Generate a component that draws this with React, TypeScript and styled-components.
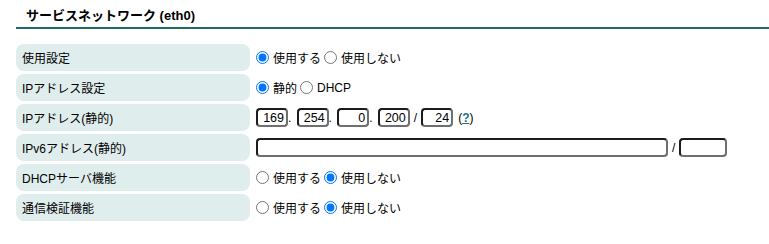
import React from 'react';
import styled, { createGlobalStyle } from 'styled-components';

const GlobalStyle = createGlobalStyle`
    html, body {
        margin: 0;
        padding: 0;
        background: #ffffff;
    }
    body {
        font-family: "Liberation Sans", "Noto Sans CJK JP", sans-serif;
        font-size: 12px;
        color: #000000;
    }
`;

const Page = styled.div`
    padding: 0 0 0 16px;
`;

const Title = styled.h2`
    margin: 0;
    height: 29px;
    box-sizing: border-box;
    padding: 7px 0 0 10px;
    font-size: 13px;
    line-height: 18px;
    font-weight: bold;
    border-bottom: 2px solid #1f6b66;
`;

const Table = styled.div`
    display: grid;
    grid-template-columns: 234px 1fr;
    row-gap: 3px;
    margin-top: 15px;
`;

const Label = styled.div`
    height: 27px;
    display: flex;
    align-items: center;
    padding-left: 6px;
    background: #e0eded;
    border-radius: 8px;
    white-space: nowrap;
`;

const Value = styled.div`
    display: flex;
    align-items: center;
    padding-left: 6px;
    white-space: nowrap;
`;

const Choice = styled.label`
    display: inline-flex;
    align-items: center;
    margin-right: 3px;
    cursor: pointer;
`;

const Radio = styled.input.attrs({ type: 'radio' })`
    width: 13px;
    height: 13px;
    margin: 0 4px 0 0;
`;

const Field = styled.input.attrs({ type: 'text' })<{ $w: number }>`
    width: ${props => `${props.$w}px`};
    height: 19px;
    box-sizing: border-box;
    margin: 0;
    padding: 0 2px;
    font-family: "Liberation Sans", sans-serif;
    font-size: 12.5px;
    text-align: right;
    border: 2px solid;
    border-color: #1c1c1c #6f6f6f #6f6f6f #1c1c1c;
    border-radius: 4px;
    background: #ffffff;
`;

const Sep = styled.span<{ $pad?: number }>`
    display: inline-block;
    padding: ${props => `0 ${props.$pad ?? 0}px`};
    width: ${props => (props.$pad ? 'auto' : '8.6px')};
    line-height: 19px;
    padding-top: 2px;
`;

const Help = styled.span`
    margin-left: 5px;
    a {
        color: #1a6f8a;
        font-weight: bold;
        text-decoration: underline;
    }
`;

interface ChoiceType {
    name: string;
    options: string[];
    checked: number;
}

const RadioGroup: React.FC<ChoiceType> = props => {
    const { name, options, checked } = props;
    return (
        <>
            {options.map((opt, i) => (
                <Choice key={opt}>
                    <Radio name={name} defaultChecked={i === checked} />
                    {opt}
                </Choice>
            ))}
        </>
    );
};

const useOpts = ['使用する', '使用しない'];

export default function App() {
    return (
        <Page>
            <GlobalStyle />
            <Title>サービスネットワーク (eth0)</Title>
            <Table>
                <Label>使用設定</Label>
                <Value>
                    <RadioGroup name="use" options={useOpts} checked={0} />
                </Value>

                <Label>IPアドレス設定</Label>
                <Value>
                    <RadioGroup name="mode" options={['静的', 'DHCP']} checked={0} />
                </Value>

                <Label>IPアドレス(静的)</Label>
                <Value>
                    <Field $w={32} defaultValue="169" />
                    <Sep>.</Sep>
                    <Field $w={32} defaultValue="254" />
                    <Sep>.</Sep>
                    <Field $w={32} defaultValue="0" />
                    <Sep>.</Sep>
                    <Field $w={32} defaultValue="200" />
                    <Sep $pad={4}>/</Sep>
                    <Field $w={32} defaultValue="24" />
                    <Help>
                        (<a href="#help">?</a>)
                    </Help>
                </Value>

                <Label>IPv6アドレス(静的)</Label>
                <Value>
                    <Field $w={412} defaultValue="" />
                    <Sep $pad={4}>/</Sep>
                    <Field $w={48} defaultValue="" />
                </Value>

                <Label>DHCPサーバ機能</Label>
                <Value>
                    <RadioGroup name="dhcp" options={useOpts} checked={1} />
                </Value>

                <Label>通信検証機能</Label>
                <Value>
                    <RadioGroup name="check" options={useOpts} checked={1} />
                </Value>
            </Table>
        </Page>
    );
}
